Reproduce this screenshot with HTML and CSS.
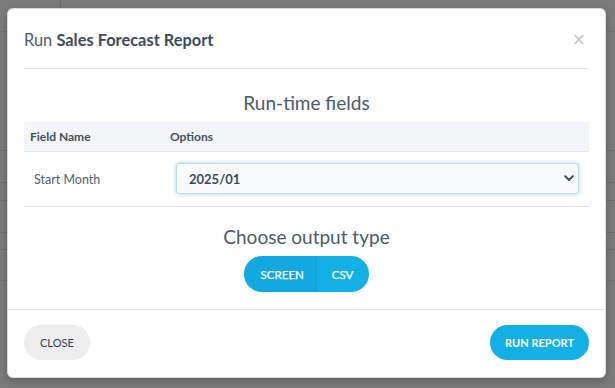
FILE: index.html
```html
<!DOCTYPE html>
<html lang="en">
<head>
<meta charset="utf-8">
<title>Run Sales Forecast Report</title>
<link rel="stylesheet" href="styles.css">
</head>
<body>
<div class="modal">
  <div class="modal-header">
    <h1 class="title">Run <strong>Sales Forecast Report</strong></h1>
    <button class="x-close" type="button" aria-label="Close">&times;</button>
  </div>
  <div class="modal-body">
    <h2 class="section-title">Run-time fields</h2>
    <div class="fields">
      <div class="fields-head">
        <div class="col-name">Field Name</div>
        <div class="col-opt">Options</div>
      </div>
      <div class="fields-row">
        <div class="row-name">Start Month</div>
        <div class="select-wrap">
          <select class="select">
            <option>2025/01</option>
          </select>
          <svg class="chevron" width="10" height="7" viewBox="0 0 10 7"><path d="M1.2 1.2 L5 5 L8.8 1.2" fill="none" stroke="#3e5063" stroke-width="2" stroke-linecap="round" stroke-linejoin="round"/></svg>
        </div>
      </div>
    </div>
    <h2 class="section-title second">Choose output type</h2>
    <div class="toggle-row">
      <div class="toggle">
        <button class="seg active" type="button">SCREEN</button>
        <button class="seg" type="button">CSV</button>
      </div>
    </div>
  </div>
  <div class="modal-footer">
    <button class="btn btn-close" type="button">CLOSE</button>
    <button class="btn btn-run" type="button">RUN REPORT</button>
  </div>
</div>
</body>
</html>
```

FILE: styles.css
```css
html, body {
  margin: 0;
  padding: 0;
}
body {
  width: 615px;
  height: 388px;
  overflow: hidden;
  font-family: Lato, "Open Sans", sans-serif;
  background-color: #7a7a7a;
  background-image:
    linear-gradient(to right, transparent 60px, #6c6c6c 60px, #6c6c6c 61px, transparent 61px),
    linear-gradient(to bottom, transparent 31px, #707070 31px, #707070 32px, transparent 32px),
    linear-gradient(to bottom, transparent 150px, #707070 150px, #707070 151px, transparent 151px),
    linear-gradient(to bottom, transparent 182px, #6e6e6e 182px, #6e6e6e 183px, transparent 183px),
    linear-gradient(to bottom, transparent 200px, #6e6e6e 200px, #6e6e6e 201px, transparent 201px),
    linear-gradient(to bottom, transparent 232px, #6e6e6e 232px, #6e6e6e 233px, transparent 233px),
    linear-gradient(to bottom, transparent 249px, #6e6e6e 249px, #6e6e6e 250px, transparent 250px),
    linear-gradient(to bottom, transparent 280px, #707070 280px, #707070 281px, transparent 281px);
  background-size: 100% 10px, 100% 100%, 100% 100%, 100% 100%, 100% 100%, 100% 100%, 100% 100%, 100% 100%;
  background-repeat: no-repeat;
  padding-top: 9px;
  padding-left: 8px;
  box-sizing: border-box;
}
.modal {
  width: 597px;
  height: 368px;
  background: #ffffff;
  border-radius: 5px;
  box-shadow: 0 0 0 1px #d4dde5, 0 3px 8px rgba(0, 0, 0, 0.25);
  display: flex;
  flex-direction: column;
  box-sizing: border-box;
}
.modal-header {
  height: 60px;
  margin: 0 16px;
  border-bottom: 1px solid #e2e4e6;
  display: flex;
  align-items: center;
  justify-content: space-between;
  box-sizing: border-box;
  padding-top: 1px;
}
.title {
  margin: 0;
  font-size: 16.4px;
  font-weight: 400;
  color: #4d5d6d;
}
.title strong {
  font-weight: 700;
  color: #3b4c5d;
}
.x-close {
  border: 0;
  background: none;
  padding: 0;
  margin-right: 3px;
  font-family: "DejaVu Sans", sans-serif;
  font-size: 17px;
  line-height: 1;
  color: #c6c6c6;
  cursor: pointer;
}
.modal-body {
  padding: 0 16px;
  flex: 1;
  display: flex;
  flex-direction: column;
}
.section-title {
  margin: 23px 0 8px;
  text-align: center;
  font-size: 19px;
  line-height: 22px;
  font-weight: 400;
  color: #4a5b6c;
}
.section-title.second {
  margin-top: 19px;
}
.fields-head {
  height: 29px;
  background: #f3f6f9;
  border-bottom: 1px solid #e1e5e9;
  display: flex;
  align-items: center;
  font-size: 12px;
  font-weight: 700;
  color: #3f5062;
}
.col-name {
  width: 140px;
  padding-left: 6px;
}
.fields-row {
  height: 54px;
  border-bottom: 1px solid #dfe2e5;
  display: flex;
  align-items: center;
}
.row-name {
  width: 142px;
  padding-left: 10px;
  font-size: 12.5px;
  color: #4f5f6f;
}
.select-wrap {
  position: relative;
  width: 403px;
  height: 31px;
  margin-top: -1px;
}
.select {
  appearance: none;
  -webkit-appearance: none;
  width: 100%;
  height: 100%;
  box-sizing: border-box;
  border: 1px solid #bcdcf1;
  border-radius: 3px;
  background: #f8fafc;
  box-shadow: 0 0 4px rgba(110, 175, 230, 0.55);
  padding: 0 12px;
  font-family: Lato, "Open Sans", sans-serif;
  font-size: 13px;
  font-weight: 700;
  color: #3a4b5c;
  outline: none;
}
.chevron {
  position: absolute;
  right: 5px;
  top: 12px;
  pointer-events: none;
}
.toggle-row {
  display: flex;
  justify-content: center;
}
.toggle {
  display: flex;
  height: 36px;
  border-radius: 18px;
  overflow: hidden;
}
.seg {
  border: 0;
  margin: 0;
  background: #13b0e6;
  color: #ffffff;
  font-family: Lato, "Open Sans", sans-serif;
  font-size: 11.5px;
  font-weight: 400;
  -webkit-text-stroke: 0.25px #ffffff;
  padding: 0 16px 0 15px;
  cursor: pointer;
}
.seg.active {
  background: #11a9df;
  padding: 0 13px 0 17px;
  box-shadow: inset -1px 0 0 #0f9fd2;
}
.modal-footer {
  border-top: 1px solid #e2e4e6;
  padding: 15px 16px 0;
  display: flex;
  justify-content: space-between;
  height: 68px;
  box-sizing: border-box;
}
.btn {
  height: 35px;
  border: 0;
  border-radius: 18px;
  font-family: Lato, "Open Sans", sans-serif;
  font-size: 11px;
  font-weight: 400;
  cursor: pointer;
}
.btn-close {
  background: #ededed;
  color: #2e3f50;
  padding: 0 16px;
}
.btn-run {
  background: #13b0e6;
  color: #ffffff;
  font-weight: 700;
  padding: 0 15px;
}
```
